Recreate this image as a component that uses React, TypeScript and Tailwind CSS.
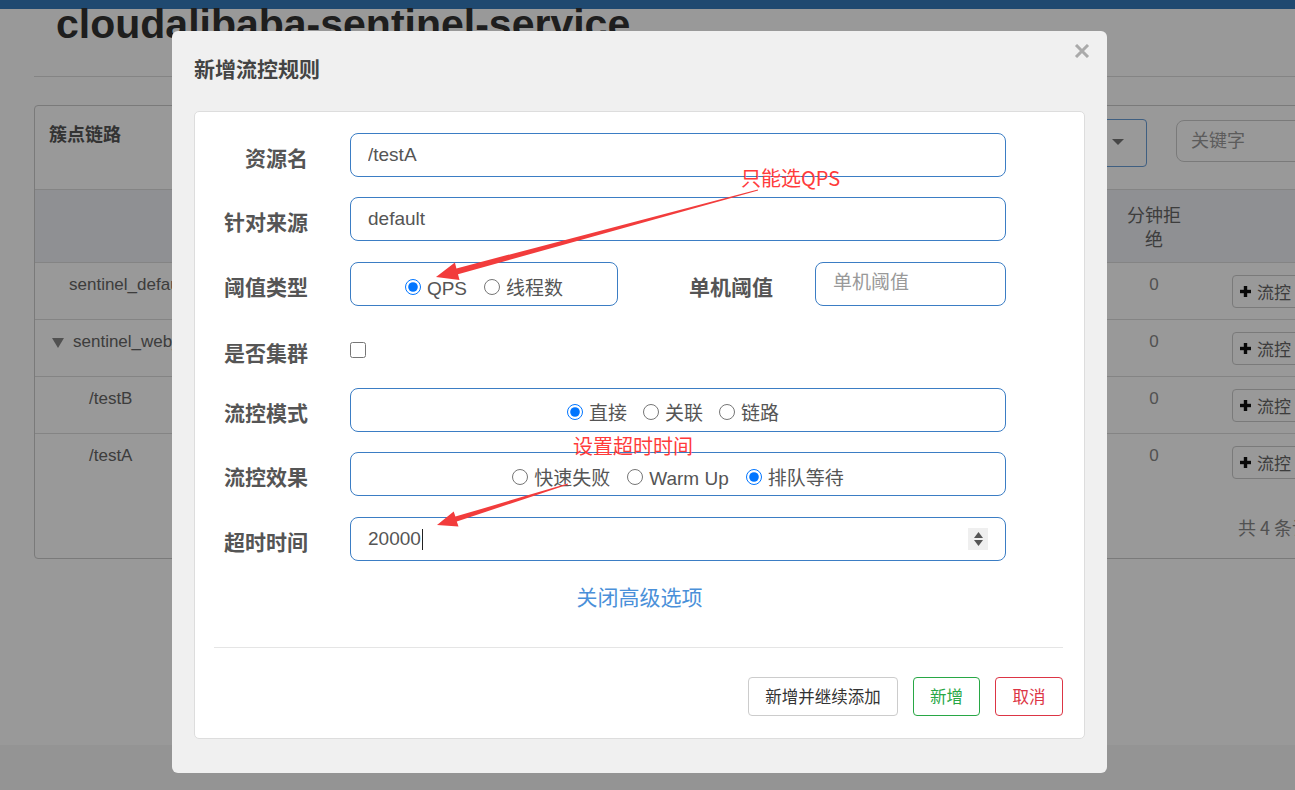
import React from "react";

const SANS = "font-['Liberation_Sans','Noto_Sans_CJK_SC',sans-serif]";

function Radio({ name, checked, label }: { name: string; checked?: boolean; label: string }) {
  return (
    <label className="flex items-center gap-[6px]">
      <input type="radio" name={name} defaultChecked={checked} className="m-0 h-[16px] w-[16px]" />
      <span className="translate-y-[2px] leading-[24px]">{label}</span>
    </label>
  );
}

function Label({ children }: { children: React.ReactNode }) {
  return (
    <div className="w-[113px] shrink-0 translate-y-[2px] text-right text-[21px] font-bold leading-[28px] text-[#555] font-['Noto_Sans_CJK_SC',sans-serif]">
      {children}
    </div>
  );
}

const boxCls =
  "h-[44px] rounded-[8px] border border-[#3b7dc4] bg-white text-[19px] text-[#555] outline-none";

function PlusBtn() {
  return (
    <div className="flex h-[33px] w-[90px] items-center gap-[6px] rounded-[4px] border border-[#ccc] pl-[7px] text-[17px] text-[#666]">
      <svg width="11" height="11" viewBox="0 0 11 11">
        <rect x="3.8" y="0" width="3.4" height="11" fill="#111" />
        <rect x="0" y="3.8" width="11" height="3.4" fill="#111" />
      </svg>
      <span className="font-['Noto_Sans_CJK_SC',sans-serif]">流控</span>
    </div>
  );
}

const rows = [
  { pad: "pl-[34px]", text: "sentinel_default_context", tri: false },
  { pad: "pl-[17px]", text: "sentinel_web_servlet_context", tri: true },
  { pad: "pl-[54px]", text: "/testB", tri: false },
  { pad: "pl-[54px]", text: "/testA", tri: false },
];

export default function App() {
  return (
    <div className={`relative h-[790px] w-[1295px] overflow-hidden bg-white ${SANS}`}>
      {/* background page */}
      <div className="h-[9px] bg-[#347abb]" />
      <h1 className="ml-[56px] whitespace-nowrap text-[41px] font-bold leading-[30px] text-[#333] font-['Liberation_Sans',sans-serif]">
        cloudalibaba-sentinel-service
      </h1>
      <div className="ml-[34px] mt-[37px] h-px w-[1300px] bg-[#ddd]" />
      <div className="ml-[34px] mt-[28px] w-[1300px] rounded-[4px] border border-[#ccc]">
        <div className="flex h-[84px] items-start border-b border-[#ddd]">
          <div className="pl-[14px] pt-[15px] text-[18px] font-bold leading-[24px] text-[#555] font-['Noto_Sans_CJK_SC',sans-serif]">
            簇点链路
          </div>
          <div className="ml-auto mt-[13px] flex h-[48px] w-[140px] items-center justify-end rounded-[4px] border border-[#6a9ed8] pr-[22px]">
            <svg width="12" height="6" viewBox="0 0 12 6" className="-translate-y-[1px]">
              <path d="M0 0 L12 0 L6 6 Z" fill="#777" />
            </svg>
          </div>
          <div className="ml-[29px] mr-[10px] mt-[14px] flex h-[42px] w-[147px] items-center rounded-[8px] border border-[#ccc] pb-[3px] pl-[14px] text-[18px] text-[#999] font-['Noto_Sans_CJK_SC',sans-serif]">
            关键字
          </div>
        </div>
        <div className="flex h-[73px] border-b border-[#ddd] bg-[#eef0f5]">
          <div className="flex-1" />
          <div className="flex w-[70px] items-center justify-center text-center text-[18px] leading-[24px] text-[#666] font-['Noto_Sans_CJK_SC',sans-serif]">
            分钟拒绝
          </div>
          <div className="w-[144px]" />
        </div>
        {rows.map((r, i) => (
          <div key={i} className={`flex h-[57px] ${i < 3 ? "border-b border-[#ddd]" : ""}`}>
            <div className={`flex min-w-0 flex-1 items-start gap-[9px] overflow-hidden pt-[10px] ${r.pad}`}>
              {r.tri && (
                <svg width="12" height="10" viewBox="0 0 12 10" className="mt-[8px] shrink-0">
                  <path d="M0 0 L12 0 L6 10 Z" fill="#888" />
                </svg>
              )}
              <span className="whitespace-nowrap text-[17px] leading-[24px] text-[#666]">{r.text}</span>
            </div>
            <div className="w-[70px] pt-[10px] text-center text-[17px] leading-[24px] text-[#888]">0</div>
            <div className="w-[144px] pl-[43px] pt-[12px]">
              <PlusBtn />
            </div>
          </div>
        ))}
        <div className="flex h-[67px]">
          <div className="flex-1" />
          <div className="w-[70px]" />
          <div className="w-[144px] overflow-hidden whitespace-nowrap pl-[49px] pt-[24px] text-[18px] leading-[24px] text-[#888] font-['Noto_Sans_CJK_SC',sans-serif]">
            共 4 条记录
          </div>
        </div>
      </div>
      <div className="mt-[186px] h-[45px] bg-[#f7f7f7]" />

      {/* backdrop */}
      <div className="absolute inset-0 bg-black/40" />

      {/* modal */}
      <div className="absolute left-[172px] top-[31px] flex h-[742px] w-[935px] flex-col rounded-[6px] bg-[#f0f0f0] px-[22px]">
        <div className="relative h-[80px] shrink-0">
          <div className="pt-[23px] text-[21px] font-bold leading-[28px] text-[#444] font-['Noto_Sans_CJK_SC',sans-serif]">
            新增流控规则
          </div>
          <svg width="16" height="14" viewBox="0 0 16 14" className="absolute right-[-5px] top-[13px]">
            <path d="M2 1 L14 13 M14 1 L2 13" stroke="#aaa" strokeWidth="3" />
          </svg>
        </div>
        <div className="flex h-[628px] flex-col rounded-[5px] border border-[#ddd] bg-white pt-[21px]">
          {/* 资源名 */}
          <div className="flex h-[44px] items-center">
            <Label>资源名</Label>
            <input readOnly defaultValue="/testA" className={`${boxCls} ml-[42px] w-[656px] px-[17px]`} />
          </div>
          {/* 针对来源 */}
          <div className="mt-[20px] flex h-[44px] items-center">
            <Label>针对来源</Label>
            <input readOnly defaultValue="default" className={`${boxCls} ml-[42px] w-[656px] px-[17px]`} />
          </div>
          {/* 阈值类型 */}
          <div className="mt-[21px] flex h-[44px] items-center">
            <Label>阈值类型</Label>
            <div className={`${boxCls} ml-[42px] flex w-[268px] items-center justify-center gap-[17px] pt-[6px]`}>
              <Radio name="grade" checked label="QPS" />
              <Radio name="grade" label="线程数" />
            </div>
            <div className="ml-[71px] w-[84px] translate-y-[2px] text-[21px] font-bold leading-[28px] text-[#555] font-['Noto_Sans_CJK_SC',sans-serif]">
              单机阈值
            </div>
            <input
              readOnly
              placeholder="单机阈值"
              className={`${boxCls} ml-[42px] w-[191px] pb-[3px] pl-[17px] placeholder:text-[#999]`}
            />
          </div>
          {/* 是否集群 */}
          <div className="mt-[22px] flex h-[44px] items-center">
            <Label>是否集群</Label>
            <input type="checkbox" className="m-0 ml-[42px] h-[16px] w-[16px]" />
          </div>
          {/* 流控模式 */}
          <div className="mt-[16px] flex h-[44px] items-center">
            <Label>流控模式</Label>
            <div className={`${boxCls} ml-[42px] flex w-[656px] items-center justify-center gap-[16px] pr-[10px] pt-[3px]`}>
              <Radio name="mode" checked label="直接" />
              <Radio name="mode" label="关联" />
              <Radio name="mode" label="链路" />
            </div>
          </div>
          {/* 流控效果 */}
          <div className="mt-[20px] flex h-[44px] items-center">
            <Label>流控效果</Label>
            <div className={`${boxCls} ml-[42px] flex w-[656px] items-center justify-center gap-[17px] pt-[6px]`}>
              <Radio name="effect" label="快速失败" />
              <Radio name="effect" label="Warm Up" />
              <Radio name="effect" checked label="排队等待" />
            </div>
          </div>
          {/* 超时时间 */}
          <div className="mt-[21px] flex h-[44px] items-center">
            <Label>超时时间</Label>
            <div className={`${boxCls} ml-[42px] flex w-[656px] items-center pl-[17px] pr-[17px]`}>
              <span className="leading-[24px]">20000</span>
              <span className="ml-[1px] h-[21px] w-px bg-[#222]" />
              <div className="flex-1" />
              <div className="flex h-[22px] w-[20px] flex-col items-center justify-center gap-[2px] bg-[#efefef]">
                <svg width="9" height="6" viewBox="0 0 9 6">
                  <path d="M0 6 L9 6 L4.5 0 Z" fill="#555" />
                </svg>
                <svg width="9" height="6" viewBox="0 0 9 6">
                  <path d="M0 0 L9 0 L4.5 6 Z" fill="#555" />
                </svg>
              </div>
            </div>
          </div>
          <div className="mt-[21px] text-center text-[21px] leading-[28px] text-[#4a90d9] font-['Noto_Sans_CJK_SC',sans-serif]">
            关闭高级选项
          </div>
          <div className="ml-[19px] mr-[21px] mt-[37px] h-px bg-[#e5e5e5]" />
          <div className="mr-[21px] mt-[29px] flex justify-end gap-[15px] text-[16.5px] font-['Noto_Sans_CJK_SC',sans-serif]">
            <div className="flex h-[39px] w-[150px] items-center justify-center rounded-[4px] border border-[#ccc] text-[#333]">
              新增并继续添加
            </div>
            <div className="flex h-[39px] w-[67px] items-center justify-center rounded-[4px] border border-[#28a745] text-[#28a745]">
              新增
            </div>
            <div className="flex h-[39px] w-[68px] items-center justify-center rounded-[4px] border border-[#dc3545] text-[#dc3545]">
              取消
            </div>
          </div>
        </div>
      </div>

      {/* annotations */}
      <svg className="pointer-events-none absolute left-0 top-0" width="1295" height="790" viewBox="0 0 1295 790">
        <polygon
          points="758.1,190.5 458,274.2 459.5,280 436,277 454.9,262.6 456.4,268.4 757.9,189.5"
          fill="#f23c3c"
        />
        <polygon
          points="568.15,484.5 456.8,521.4 458.5,526.6 437,525 453.7,511.4 455.4,516.6 567.85,483.5"
          fill="#f23c3c"
        />
      </svg>
      <div className="absolute left-[741px] top-[166px] whitespace-nowrap text-[20px] leading-[24px] text-[#ff3b3b] font-['Noto_Sans_CJK_SC',sans-serif]">
        只能选QPS
      </div>
      <div className="absolute left-[573px] top-[434px] whitespace-nowrap text-[20px] leading-[24px] text-[#ff3b3b] font-['Noto_Sans_CJK_SC',sans-serif]">
        设置超时时间
      </div>
    </div>
  );
}
